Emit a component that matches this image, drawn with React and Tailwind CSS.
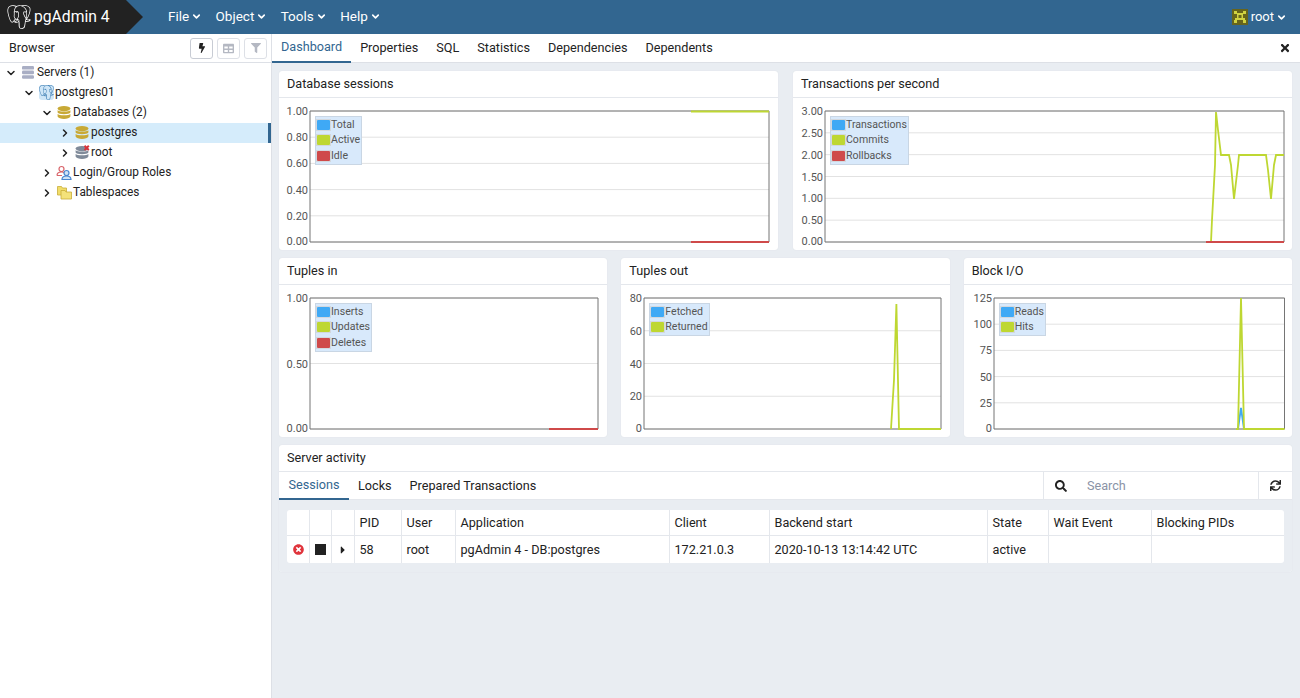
import { FaBolt, FaTable, FaFilter, FaTimes, FaSearch, FaSync, FaTimesCircle, FaSquareFull, FaCaretRight } from "react-icons/fa";
import { SiPostgresql } from "react-icons/si";
import { ChevronDown, ChevronRight } from "lucide-react";

const BLUE = "#3fa9f5";
const GREEN = "#bed732";
const RED = "#cf4a4a";

const MENUS = ["File", "Object", "Tools", "Help"];
const TABS = ["Dashboard", "Properties", "SQL", "Statistics", "Dependencies", "Dependents"];

// line points are relative to the card top
const CHARTS = {
  sessions: {
    title: "Database sessions",
    w: 500,
    x0: 31,
    x1: 490,
    ticks: ["1.00", "0.80", "0.60", "0.40", "0.20", "0.00"],
    legend: [["Total", BLUE], ["Active", GREEN], ["Idle", RED]],
    lines: [
      [GREEN, [[412, 40.5], [490, 40.5]]],
      [RED, [[412, 171], [490, 171]]],
    ],
  },
  tps: {
    title: "Transactions per second",
    w: 500,
    x0: 32,
    x1: 491,
    ticks: ["3.00", "2.50", "2.00", "1.50", "1.00", "0.50", "0.00"],
    legend: [["Transactions", BLUE], ["Commits", GREEN], ["Rollbacks", RED]],
    lines: [
      [GREEN, [[418, 171], [419, 149], [422, 94], [423, 41], [425, 59], [428, 84], [436, 84], [438, 94], [441, 128], [445, 94], [446, 84], [473, 84], [475, 99], [478, 128], [481, 94], [483, 84], [491, 84]]],
      [RED, [[413, 171], [491, 171]]],
    ],
  },
  tuplesIn: {
    title: "Tuples in",
    w: 329,
    x0: 31,
    x1: 319,
    ticks: ["1.00", "0.50", "0.00"],
    legend: [["Inserts", BLUE], ["Updates", GREEN], ["Deletes", RED]],
    lines: [[RED, [[270, 171], [319, 171]]]],
  },
  tuplesOut: {
    title: "Tuples out",
    w: 329,
    x0: 23,
    x1: 320,
    ticks: ["80", "60", "40", "20", "0"],
    legend: [["Fetched", BLUE], ["Returned", GREEN]],
    lines: [[GREEN, [[270, 171], [273, 122], [275.4, 46], [278, 171], [320, 171]]]],
  },
  blockIo: {
    title: "Block I/O",
    w: 329,
    x0: 30,
    x1: 320.5,
    ticks: ["125", "100", "75", "50", "25", "0"],
    legend: [["Reads", BLUE], ["Hits", GREEN]],
    lines: [
      [BLUE, [[274, 171], [277, 150], [280, 171]]],
      [GREEN, [[272, 171], [274, 171], [277, 40], [280, 171], [320.5, 171]]],
    ],
  },
};

const COLS = ["", "", "", "PID", "User", "Application", "Client", "Backend start", "State", "Wait Event", "Blocking PIDs"];

function ServersIcon() {
  return (
    <svg width="14" height="15" viewBox="0 0 14 15">
      <rect x="1" y="1" width="12" height="3.6" rx="1.2" fill="#a9aec4" />
      <rect x="1" y="5.6" width="12" height="3.6" rx="1.2" fill="#a9aec4" />
      <rect x="1" y="10.2" width="12" height="3.6" rx="1.2" fill="#a9aec4" />
    </svg>
  );
}

function ServerIcon() {
  return (
    <span className="relative block h-[15px] w-[15px] rounded-[3px] bg-[#cfe6f7]">
      <SiPostgresql className="absolute top-0 left-0 h-[15px] w-[15px] text-[#3577ae]" />
    </span>
  );
}

function DbIcon({ fill = "#c8a935", dead }) {
  return (
    <svg width="15" height="15" viewBox="0 0 15 15">
      <ellipse cx="7" cy="3.6" rx="6.4" ry="2.6" fill={fill} />
      <path d="M.6 5.2c1 1.7 11.8 1.7 12.8 0v2.2c-1 2.3-11.8 2.3-12.8 0z" fill={fill} />
      <path d="M.6 9c1 1.7 11.8 1.7 12.8 0v2.4c-1 3.3-11.8 3.3-12.8 0z" fill={fill} />
      {dead && <path d="M9.5 .8l4.3 4.3M13.8 .8L9.5 5.1" stroke="#d8333a" strokeWidth="2" />}
    </svg>
  );
}

function RolesIcon() {
  return (
    <svg width="16" height="16" viewBox="0 0 16 16" fill="none">
      <circle cx="5.5" cy="4" r="2.5" stroke="#d9646a" strokeWidth="1.2" />
      <path d="M1 10.5c0-3 2-3.5 4.5-3.5 1.5 0 2.5.3 3 1.2M1 10.5h5" stroke="#d9646a" strokeWidth="1.2" />
      <circle cx="10.5" cy="8" r="2.5" fill="#cfe3f7" stroke="#4a86cf" strokeWidth="1.2" />
      <path d="M6 14.5c0-3 2-3.5 4.5-3.5s4.5.5 4.5 3.500z" fill="#cfe3f7" stroke="#4a86cf" strokeWidth="1.2" />
    </svg>
  );
}

function TablespaceIcon() {
  return (
    <svg width="15" height="15" viewBox="0 0 15 15">
      <path d="M.5 1.5h4l1 1.5h4v7H.5z" fill="#f1dd6a" stroke="#c9ad3a" strokeWidth=".8" />
      <path d="M4 5.5h4l1 1.5h5.5v7H4z" fill="#f4e27a" stroke="#c9ad3a" strokeWidth=".8" />
    </svg>
  );
}

function Avatar() {
  return (
    <svg width="16" height="16" viewBox="0 0 16 16">
      <rect width="16" height="16" fill="#66641c" />
      <path d="M2 2h3v3H2zM11 2h3v3h-3zM5 4h6v2H5zM5 6h1.5v3H5zM9.5 6H11v3H9.500zM3 9h10v2H3zM2 11h3v3H2zM11 11h3v3h-3z" fill="#cfd242" />
    </svg>
  );
}

function TreeRow({ level, open, active, icon, label }) {
  const Chevron = open ? ChevronDown : ChevronRight;
  return (
    <div className={`relative flex h-5 items-center pb-px ${active ? "bg-[#d5ecfb]" : ""}`} style={{ paddingLeft: level * 18 + 4 }}>
      <span className="flex w-[13px] justify-center">
        <Chevron size={12} strokeWidth={3} className="text-[#222]" />
      </span>
      <span className="ml-[3px] flex w-[16px] justify-center">{icon}</span>
      <span className="ml-px text-[11.85px] text-[#222]">{label}</span>
      {active && <span className="absolute top-0 right-0 h-5 w-[3px] bg-[#326690]" />}
    </div>
  );
}

function Browser() {
  return (
    <aside className="flex w-[272px] shrink-0 flex-col border-r border-[#dde0e6] bg-white">
      <div className="flex h-[29px] items-center justify-between border-b border-[#dde0e6] pr-[4px] pl-[9px]">
        <span className="text-[12.5px] text-[#222]">Browser</span>
        <div className="flex gap-[4px]">
          <button className="flex h-[21px] w-[23px] items-center justify-center rounded-[3px] border border-[#c8ccd4]">
            <FaBolt className="text-[10px] text-[#222]" />
          </button>
          <button className="flex h-[21px] w-[23px] items-center justify-center rounded-[3px] border border-[#dde0e6]">
            <FaTable className="text-[11px] text-[#b4b8c2]" />
          </button>
          <button className="flex h-[21px] w-[23px] items-center justify-center rounded-[3px] border border-[#dde0e6]">
            <FaFilter className="text-[10px] text-[#b4b8c2]" />
          </button>
        </div>
      </div>
      <div>
        <TreeRow level={0} open icon={<ServersIcon />} label="Servers (1)" />
        <TreeRow level={1} open icon={<ServerIcon />} label="postgres01" />
        <TreeRow level={2} open icon={<DbIcon />} label="Databases (2)" />
        <TreeRow level={3} active icon={<DbIcon />} label="postgres" />
        <TreeRow level={3} icon={<DbIcon fill="#7f8a99" dead />} label="root" />
        <TreeRow level={2} icon={<RolesIcon />} label="Login/Group Roles" />
        <TreeRow level={2} icon={<TablespaceIcon />} label="Tablespaces" />
      </div>
    </aside>
  );
}

function Chart({ title, w, x0, x1, ticks, legend, lines }) {
  const top = 13;
  const bottom = 144;
  const step = (bottom - top) / (ticks.length - 1);
  return (
    <div className="rounded-[3px] bg-white shadow-[0_0_1px_#cfd4dc]">
      <div className="flex h-[27px] items-center border-b border-[#e4e7ec] px-2 pt-px text-[12.65px] text-[#222]">{title}</div>
      <div className="relative h-[152px]">
        <svg width={w} height="152" className="block">
          {ticks.map((t, i) => (
            <g key={t}>
              <line x1={x0} x2={x1} y1={top + i * step} y2={top + i * step} stroke="#e2e2e2" />
              <text x={x0 - 2} y={top + i * step + (i === ticks.length - 1 ? 3 : 4)} textAnchor="end" fontSize="11" fill="#555" fontFamily="Roboto, sans-serif">
                {t}
              </text>
            </g>
          ))}
          <path d={`M${x0} ${top}H${x1}V${bottom}H${x0}Z`} fill="none" stroke="#757575" />
          {lines.map(([color, pts], i) => (
            <polyline key={i} points={pts.map(([x, y]) => `${x},${y - 27}`).join(" ")} fill="none" stroke={color} strokeWidth="1.8" />
          ))}
        </svg>
        <div className="absolute top-[18px] border border-[#c9d6e4] bg-[#d8e9fb] pr-[1px] text-[10.55px] text-[#555]" style={{ left: x0 + 5 }}>
          {legend.map(([name, color]) => (
            <div key={name} className="flex h-[15.5px] items-center">
              <span className="flex h-[12px] w-[15px] items-center justify-center border border-[#d3d8de]">
                <span className="h-[10px] w-[13px] rounded-[1px]" style={{ background: color }} />
              </span>
              <span>{name}</span>
            </div>
          ))}
        </div>
      </div>
    </div>
  );
}

function ServerActivity() {
  const grid = "grid grid-cols-[23px_22px_23px_47px_54px_214px_100px_218px_61px_103px_1fr]";
  const row = ["58", "root", "pgAdmin 4 - DB:postgres", "172.21.0.3", "2020-10-13 13:14:42 UTC", "active", "", ""];
  return (
    <div className="mt-2 rounded-[3px] bg-white shadow-[0_0_1px_#cfd4dc]">
      <div className="flex h-[27px] items-center border-b border-[#e4e7ec] px-2 pt-px text-[12.65px] text-[#222]">Server activity</div>
      <div className="flex h-[28px] items-center border-b border-[#e4e7ec] text-[12.65px] text-[#222]">
        <span className="flex h-[28px] w-[70px] items-center justify-center border-b-2 border-[#326690] pt-[2px] text-[#326690]">Sessions</span>
        <span className="ml-[9px] pt-[2px]">Locks</span>
        <span className="ml-[18px] pt-[2px]">Prepared Transactions</span>
        <div className="ml-auto flex h-full w-[249px] items-center border-l border-[#e4e7ec]">
          <FaSearch className="ml-[11px] text-[12px] text-[#222]" />
          <span className="ml-[20px] pt-[2px] text-[#8a93a6]">Search</span>
          <span className="ml-auto flex h-full w-[34px] items-center justify-center border-l border-[#e4e7ec]">
            <FaSync className="text-[11px] text-[#222]" />
          </span>
        </div>
      </div>
      <div className="rounded-b-[3px] bg-[#e9edf2] pt-[10px] pr-2 pb-[9px] pl-2">
        <div className="overflow-hidden rounded-[3px] bg-white text-[12.65px] text-[#222]">
          <div className={`${grid} h-[26px] border-b border-[#e4e7ec]`}>
            {COLS.map((name, i) => (
              <div key={i} className="flex items-center border-r border-[#e4e7ec] pt-px pl-[4.5px] last:border-r-0">{name}</div>
            ))}
          </div>
          <div className={`${grid} h-[27px]`}>
            <div className="flex items-center justify-center border-r border-[#e4e7ec]"><FaTimesCircle className="text-[11px] text-[#e0343c]" /></div>
            <div className="flex items-center justify-center border-r border-[#e4e7ec]"><FaSquareFull className="text-[11px] text-[#222]" /></div>
            <div className="flex items-center justify-center border-r border-[#e4e7ec]"><FaCaretRight className="text-[12px] text-[#222]" /></div>
            {row.map((v, i) => (
              <div key={i} className="flex items-center border-r border-[#e4e7ec] pt-px pl-[4.5px] last:border-r-0">{v}</div>
            ))}
          </div>
        </div>
      </div>
    </div>
  );
}

export default function App() {
  return (
    <div className="flex h-screen flex-col overflow-hidden bg-[#e9edf2] font-['Roboto',sans-serif]">
      <header className="flex h-[34px] shrink-0 items-center bg-[#326690] text-white">
        <div className="flex h-full w-[143px] items-center bg-[#222222] pl-[7px] [clip-path:polygon(0_0,126px_0,100%_50%,126px_100%,0_100%)]">
          <SiPostgresql className="h-[24px] w-[24px] text-white" />
          <span className="ml-[3px] text-[15.7px]">pgAdmin 4</span>
        </div>
        <nav className="ml-[25px] flex gap-[13.4px] pb-px text-[13.5px]">
          {MENUS.map((m) => (
            <span key={m} className="flex items-center gap-[2px]">
              {m}
              <ChevronDown size={11} strokeWidth={3.5} />
            </span>
          ))}
        </nav>
        <div className="ml-auto flex items-center pr-[13px] text-[13px]">
          <Avatar />
          <span className="ml-[3px] pb-px">root</span>
          <ChevronDown size={11} strokeWidth={3.5} className="ml-[2px]" />
        </div>
      </header>
      <div className="flex min-h-0 flex-1">
        <Browser />
        <main className="min-w-0 flex-1">
          <div className="flex h-[29px] items-center border-b border-[#dde0e6] bg-white text-[12.65px] text-[#222]">
            {TABS.map((t, i) => (
              <span key={t} className={`flex h-[29px] items-center px-[9px] pt-px ${i === 0 ? "border-b-2 border-[#326690] text-[#326690]" : ""}`}>{t}</span>
            ))}
            <FaTimes className="mr-[9px] ml-auto text-[12px] text-[#222]" />
          </div>
          <div className="pt-[8px] pr-[8px] pl-[7px]">
            <div className="grid grid-cols-2 gap-[15px]">
              <Chart {...CHARTS.sessions} />
              <Chart {...CHARTS.tps} />
            </div>
            <div className="mt-[8px] grid grid-cols-3 gap-[14px]">
              <Chart {...CHARTS.tuplesIn} />
              <Chart {...CHARTS.tuplesOut} />
              <Chart {...CHARTS.blockIo} />
            </div>
            <ServerActivity />
          </div>
        </main>
      </div>
    </div>
  );
}
